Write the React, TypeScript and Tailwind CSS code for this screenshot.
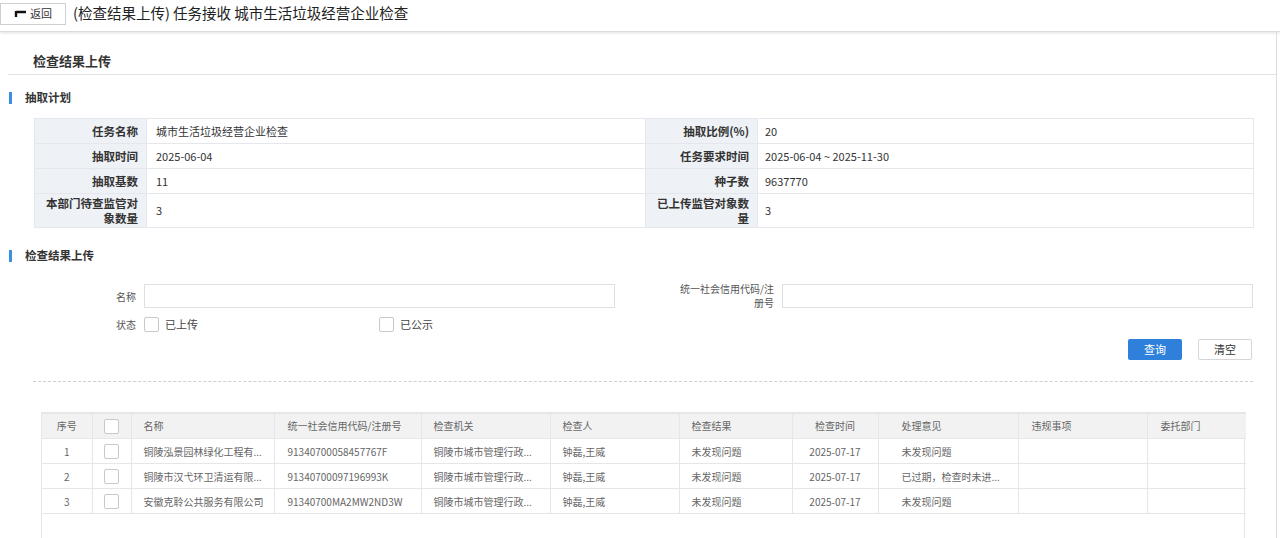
const font = { fontFamily: '"Noto Sans CJK SC", "Noto Sans", sans-serif' };

type InfoRow = { l1: string; v1: string; l2: string; v2: string; tall?: boolean };

const infoRows: InfoRow[] = [
  { l1: "任务名称", v1: "城市生活垃圾经营企业检查", l2: "抽取比例(%)", v2: "20" },
  { l1: "抽取时间", v1: "2025-06-04", l2: "任务要求时间", v2: "2025-06-04 ~ 2025-11-30" },
  { l1: "抽取基数", v1: "11", l2: "种子数", v2: "9637770" },
  { l1: "本部门待查监管对象数量", v1: "3", l2: "已上传监管对象数量", v2: "3", tall: true },
];

const rows = [
  ["1", "铜陵泓景园林绿化工程有...", "91340700058457767F", "铜陵市城市管理行政...", "钟磊,王威", "未发现问题", "2025-07-17", "未发现问题"],
  ["2", "铜陵市汉弋环卫清运有限...", "91340700097196993K", "铜陵市城市管理行政...", "钟磊,王威", "未发现问题", "2025-07-17", "已过期，检查时未进..."],
  ["3", "安徽克聆公共服务有限公司", "91340700MA2MW2ND3W", "铜陵市城市管理行政...", "钟磊,王威", "未发现问题", "2025-07-17", "未发现问题"],
];

const Box = () => (
  <span className="inline-block w-[15px] h-[15px] border border-[#c9c9c9] rounded-[2px] bg-white align-middle" />
);

const SectionTitle = ({ text }: { text: string }) => (
  <div className="flex items-center h-[20px] pl-[9px]">
    <span className="w-[3px] h-[12px] bg-[#3b8fe0]" />
    <span className="ml-[13px] text-[11.5px] font-bold text-[#333]">{text}</span>
  </div>
);

export default function App() {
  return (
    <div className="w-[1280px] h-[538px] overflow-hidden bg-white text-[#333]" style={font}>
      {/* top bar */}
      <div className="h-[32px] flex items-center border-b border-[#dcdcdc] shadow-[0_1px_3px_rgba(0,0,0,0.12)]">
        <button className="h-[22px] w-[66px] mt-[-4px] border border-[#cfcfcf] bg-white flex items-center justify-center gap-[3px] text-[11px] text-[#333]">
          <svg width="13" height="8" viewBox="0 0 13 8">
            <path d="M2 2 H12 M2 1 V7" stroke="#111" strokeWidth="2.4" fill="none" />
          </svg>
          返回
        </button>
        <span className="ml-[7px] mt-[-6px] text-[14.5px] text-[#222]">(检查结果上传) 任务接收 城市生活垃圾经营企业检查</span>
      </div>

      {/* panel */}
      <div className="w-[1277px] h-[520px] border-r border-[#dcdcdc]">
        <div className="ml-[8px] h-[43px] flex items-end pb-[4px] pl-[25px] border-b border-[#e3e3e3]">
          <span className="text-[13px] font-bold text-[#333]">检查结果上传</span>
        </div>

        <div className="mt-[13px]">
          <SectionTitle text="抽取计划" />
        </div>

        <table className="ml-[34px] mt-[10px] border-collapse text-[11px]">
          <colgroup>
            <col className="w-[112px]" />
            <col className="w-[499px]" />
            <col className="w-[112px]" />
            <col className="w-[496px]" />
          </colgroup>
          <tbody>
            {infoRows.map((r) => (
              <tr key={r.l1} className={r.tall ? "h-[34px]" : "h-[25px]"}>
                <td className="border border-[#e4e7eb] bg-[#eef1f5] text-right text-[11.5px] font-bold pr-[8px] pl-[4px] leading-[15px]">{r.l1}</td>
                <td className="border border-[#e4e7eb] pl-[9px]">{r.v1}</td>
                <td className="border border-[#e4e7eb] bg-[#eef1f5] text-right text-[11.5px] font-bold pr-[8px] pl-[8px] leading-[15px]">{r.l2}</td>
                <td className="border border-[#e4e7eb] pl-[7px]">{r.v2}</td>
              </tr>
            ))}
          </tbody>
        </table>

        <div className="mt-[18px]">
          <SectionTitle text="检查结果上传" />
        </div>

        {/* search form */}
        <div className="mt-[16px] flex items-center">
          <span className="w-[136px] text-right text-[10px] text-[#555]">名称</span>
          <div className="ml-[8px] w-[471px] h-[24px] border border-[#e0e0e0]" />
          <span className="w-[159px] text-right text-[10px] leading-[14px] text-[#555]">
            统一社会信用代码/注
            <br />
            册号
          </span>
          <div className="ml-[8px] w-[471px] h-[24px] border border-[#e0e0e0]" />
        </div>
        <div className="mt-[6px] flex items-center text-[11px] text-[#444]">
          <span className="w-[136px] text-right text-[10px] text-[#555]">状态</span>
          <span className="ml-[8px] flex items-center">
            <Box />
            <span className="ml-[6px]">已上传</span>
          </span>
          <span className="ml-[181px] flex items-center">
            <Box />
            <span className="ml-[6px]">已公示</span>
          </span>
        </div>
        <div className="mt-[6px] flex justify-end pr-[24px] gap-[16px]">
          <button className="w-[54px] h-[21px] bg-[#2f80db] rounded-[2px] text-white text-[11px]">查询</button>
          <button className="w-[54px] h-[21px] bg-white border border-[#d6d6d6] rounded-[2px] text-[#333] text-[11px]">清空</button>
        </div>
        <div className="ml-[33px] mt-[21px] w-[1220px] border-t border-dashed border-[#cfcfcf]" />

        {/* result table */}
        <div className="ml-[41px] mt-[30px] w-[1204px] h-[140px] border-x border-[#e6e6e6]">
          <table className="w-full border-collapse text-[10px] text-[#666] table-fixed">
            <colgroup>
              <col className="w-[50px]" />
              <col className="w-[39px]" />
              <col className="w-[143px]" />
              <col className="w-[147px]" />
              <col className="w-[129px]" />
              <col className="w-[129px]" />
              <col className="w-[113px]" />
              <col className="w-[86px]" />
              <col className="w-[140px]" />
              <col className="w-[129px]" />
              <col className="w-[99px]" />
            </colgroup>
            <thead>
              <tr className="h-[26px] bg-[#f2f2f2] border-t-2 border-[#e6e6e6]">
                <th className="font-normal text-center border-r border-[#e6e6e6]">序号</th>
                <th className="font-normal text-center border-r border-[#e6e6e6]"><Box /></th>
                <th className="font-normal text-left pl-[12px] border-r border-[#e6e6e6]">名称</th>
                <th className="font-normal text-left pl-[13px] border-r border-[#e6e6e6]">统一社会信用代码/注册号</th>
                <th className="font-normal text-left pl-[12px] border-r border-[#e6e6e6]">检查机关</th>
                <th className="font-normal text-left pl-[12px] border-r border-[#e6e6e6]">检查人</th>
                <th className="font-normal text-left pl-[12px] border-r border-[#e6e6e6]">检查结果</th>
                <th className="font-normal text-center border-r border-[#e6e6e6]">检查时间</th>
                <th className="font-normal text-left pl-[23px] border-r border-[#e6e6e6]">处理意见</th>
                <th className="font-normal text-left pl-[13px] border-r border-[#e6e6e6]">违规事项</th>
                <th className="font-normal text-left pl-[13px]">委托部门</th>
              </tr>
            </thead>
            <tbody>
              {rows.map((r) => (
                <tr key={r[0]} className="h-[25px] border-t border-[#e6e6e6] last:border-b">
                  <td className="text-center border-r border-[#e6e6e6]">{r[0]}</td>
                  <td className="text-center border-r border-[#e6e6e6]"><Box /></td>
                  <td className="pl-[12px] border-r border-[#e6e6e6] whitespace-nowrap overflow-hidden">{r[1]}</td>
                  <td className="pl-[13px] border-r border-[#e6e6e6] whitespace-nowrap overflow-hidden">{r[2]}</td>
                  <td className="pl-[12px] border-r border-[#e6e6e6] whitespace-nowrap overflow-hidden">{r[3]}</td>
                  <td className="pl-[12px] border-r border-[#e6e6e6]">{r[4]}</td>
                  <td className="pl-[12px] border-r border-[#e6e6e6]">{r[5]}</td>
                  <td className="text-center border-r border-[#e6e6e6]">{r[6]}</td>
                  <td className="pl-[23px] border-r border-[#e6e6e6] whitespace-nowrap overflow-hidden">{r[7]}</td>
                  <td className="border-r border-[#e6e6e6]"></td>
                  <td></td>
                </tr>
              ))}
            </tbody>
          </table>
        </div>
      </div>
    </div>
  );
}
